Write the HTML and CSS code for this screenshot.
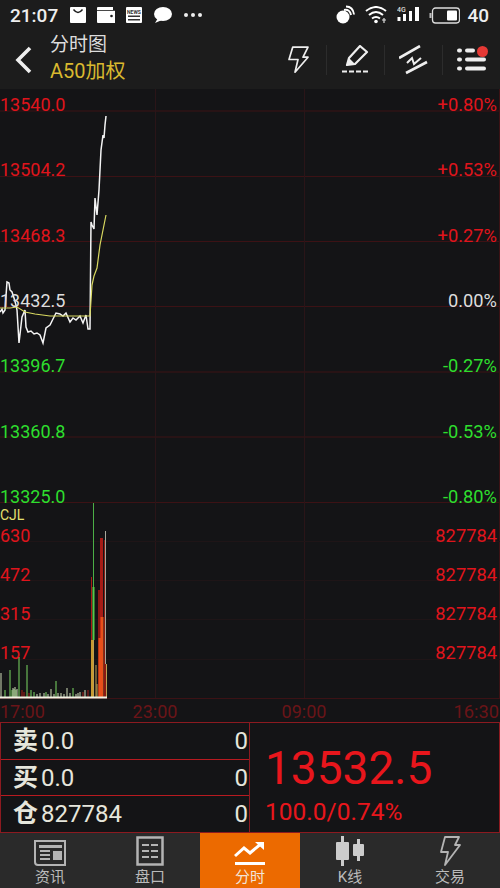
FILE: index.html
```html
<!DOCTYPE html>
<html lang="zh-CN">
<head>
    <meta charset="UTF-8">
    <meta name="viewport" content="width=device-width, initial-scale=1.0">
    <title>分时图</title>
    <link rel="stylesheet" href="styles.css">
</head>
<body>
    <div class="status">
        <span class="time">21:07</span>
        <!-- notification icons -->
        <svg class="st-icon" width="18" height="18" viewBox="0 0 18 18"><rect x="1" y="1" width="16" height="16" rx="1" fill="#fff"/><path d="M4.500 3.500q4.500 6 9 0" fill="none" stroke="#1c1c1c" stroke-width="1.400"/></svg>
        <svg class="st-icon" width="20" height="18" viewBox="0 0 20 18"><path d="M2 1h15v3h2v13H2q-1 0-1-1V2q0-1 1-1z" fill="#fff"/><rect x="0" y="4" width="19" height="0.800" fill="#1c1c1c"/><circle cx="15.500" cy="10" r="1.300" fill="#1c1c1c"/></svg>
        <svg class="st-icon" width="18" height="18" viewBox="0 0 18 18"><rect x="1" y="1" width="16" height="16" rx="1" fill="#fff"/><text class="news" x="9" y="7.500">NEWS</text><rect x="3" y="9.500" width="12" height="1.500" fill="#333"/><rect x="3" y="13" width="12" height="1.500" fill="#333"/></svg>
        <svg class="st-icon" width="20" height="18" viewBox="0 0 20 18"><ellipse cx="11" cy="8" rx="9" ry="7" fill="#fff"/><path d="M6 12l-3 5 7-3z" fill="#fff"/></svg>
        <svg class="st-icon dots" width="20" height="6" viewBox="0 0 20 6"><circle cx="3" cy="3" r="2" fill="#eee"/><circle cx="10" cy="3" r="2" fill="#eee"/><circle cx="17" cy="3" r="2" fill="#eee"/></svg>
        <span class="spacer"></span>
        <svg class="st-icon" width="20" height="20" viewBox="0 0 20 20"><circle cx="8" cy="12" r="6.500" fill="#fff"/><path d="M9 5q6-1 7 5M11 1.500q7 0 8 8" fill="none" stroke="#fff" stroke-width="2"/></svg>
        <svg class="st-icon wifi" width="22" height="18" viewBox="0 0 22 18"><path d="M1 5q10-8 20 0M4 9q7-6 14 0M7 12.500q4-3 8 0" fill="none" stroke="#fff" stroke-width="2"/><circle cx="11" cy="15.500" r="1.800" fill="#fff"/><path d="M17 14h4M19 12v5" stroke="#ddd" stroke-width="1.200"/></svg>
        <svg class="st-icon signal" width="22" height="18" viewBox="0 0 22 18"><text class="net" x="0" y="6">4G</text><rect x="0.500" y="11" width="3" height="4" fill="#fff"/><rect x="6" y="8" width="3" height="7" fill="#fff"/><rect x="12" y="5" width="3" height="10" fill="#fff"/><rect x="18" y="1" width="4" height="14" fill="#fff"/></svg>
        <svg class="st-icon battery" width="31" height="17" viewBox="0 0 31 17"><rect x="3.500" y="1" width="27" height="15" rx="3" fill="none" stroke="#ddd" stroke-width="1.300"/><rect x="0.500" y="6" width="2" height="5" fill="#bbb"/><rect x="18" y="3.500" width="10" height="10" rx="1" fill="#fff"/></svg>
        <span class="batt-num">40</span>
    </div>

    <div class="toolbar">
        <svg class="back" width="20" height="30" viewBox="0 0 20 30"><path d="M16 3L4 15l12 12" fill="none" stroke="#eee" stroke-width="3.600"/></svg>
        <div class="title">
            <div class="title-main">分时图</div>
            <div class="title-sub">A50加权</div>
        </div>
        <div class="tools">
            <div class="tool"><svg width="24" height="30" viewBox="0 0 24 30"><path d="M6.700 2.200H22l-5 10h5L9 27.200l3-12.700H3z" fill="none" stroke="#eee" stroke-width="1.700" stroke-linejoin="round"/></svg></div>
            <div class="tool"><svg width="30" height="30" viewBox="0 0 30 30"><path d="M6 20l2-7L19 1l7 6-12 12z" fill="none" stroke="#eee" stroke-width="2.200" stroke-linejoin="round"/><path d="M6 20l2-7 6 6z" fill="#eee"/><path d="M1 26.500h28" stroke="#eee" stroke-width="2.200" stroke-dasharray="5 2"/></svg></div>
            <div class="tool"><svg width="30" height="30" viewBox="0 0 30 30"><path d="M0 13L21 1M7 28L28 17" stroke="#eee" stroke-width="2.600" fill="none"/><path d="M8 18l5-5 2 6 7-6" stroke="#eee" stroke-width="2" fill="none"/></svg></div>
            <div class="tool last"><svg width="30" height="26" viewBox="0 0 30 26"><g fill="#eee"><rect x="0" y="1.500" width="5" height="4" rx="2"/><rect x="0" y="10.500" width="5" height="4" rx="2"/><rect x="0" y="19.500" width="5" height="4" rx="2"/><rect x="8" y="1.500" width="10" height="4" rx="2"/><rect x="8" y="10.500" width="21" height="4" rx="2"/><rect x="8" y="19.500" width="21" height="4" rx="2"/></g></svg><span class="dot"></span></div>
        </div>
    </div>

    <svg class="chart" width="500" height="633" viewBox="0 89 500 633">
        <g class="grid">
            <path d="M0 111H500M0 176.500H500M0 241.500H500M0 306.500H500M0 372H500M0 437H500M0 502.500H500M0 698.500H500M499.500 89V698"/>
        </g>
        <g class="grid faint">
            <path d="M155.500 89V698M304.500 89V698"/>
        </g>
        <g class="grid fainter">
            <path d="M0 541.500H500M0 580.500H500M0 619.500H500M0 659.500H500"/>
        </g>

        <!-- volume bars -->
        <g class="vol-green">
            <path d="M10 697V670M19 697V657M27 697V665M56 697V681M73 697V688M5 697V690M31 697V690M34 697V692M46 697V692M12 697V690M14 697V689M16 697V690"/>
        </g>
        <g class="vol-pale">
            <path d="M1 697V673M13 697V688M15 697V687M17 697V689M51 697V689M61 697V693M67 697V688M40 697V693M44 697V693M80 697V692M85 697V690M37 697V694M48 697V694M54 697V694M58 697V693M64 697V694M70 697V693M76 697V694M78 697V693"/>
        </g>
        <g class="vol-red">
            <path d="M22 697V690M24 697V692M29 697V693M83 697V692M88 697V690"/>
            <path class="thin" d="M91.500 697V577"/>
            <path class="fat" d="M101.500 697V538"/>
            <path class="side" d="M99 697V590M105 697V540"/>
        </g>
        <g class="vol-orange">
            <path class="wide" d="M100 697V638"/>
            <path class="wide" d="M102 697V617"/>
            <path class="side" d="M92 697V640"/>
        </g>
        <path class="vol-tan" d="M96 697V665M97 697V684M93.500 697V640M106.500 697V664"/>
        <path class="vol-top-green" d="M93.500 503V640"/>
        <path class="vol-top-green thick" d="M93.500 587V640"/>
        <path class="vol-grey" d="M105.500 664V531"/>
        <path class="vol-base" d="M0 697.500H107"/>

        <!-- price and average -->
        <polyline class="price" points="0,312 2,309 3,313 5,310 7,282 9,283 10,290 12,292 14,298 16,305 17,310 19,343 22,317 25,310 26,327 28,332 31,331 34,334 37,333 40,335 43,343 46,328 50,325 53,319 56,313 60,314 63,316 66,313 70,322 73,318 76,320 80,316 83,323 86,315 88,329 90,329 91,222 92,225 94,229 95,198 97,215 99,190 101,150 103,135 104,138 105,125 106,116"/>
        <polyline class="avg" points="0,308 10,308 17,307 25,312 35,314 50,316 70,316 90,316 92,285 94,276 97,268 100,245 104,225 106,215"/>

        <!-- price scale -->
        <g class="lbl">
            <text class="up" x="0" y="111">13540.0</text>
            <text class="up" x="0" y="176">13504.2</text>
            <text class="up" x="0" y="242">13468.3</text>
            <text class="flat" x="0" y="307">13432.5</text>
            <text class="down" x="0" y="372">13396.7</text>
            <text class="down" x="0" y="438">13360.8</text>
            <text class="down" x="0" y="503">13325.0</text>
            <text class="up end" x="497" y="111">+0.80%</text>
            <text class="up end" x="497" y="176">+0.53%</text>
            <text class="up end" x="497" y="242">+0.27%</text>
            <text class="flat end" x="497" y="307">0.00%</text>
            <text class="down end" x="497" y="372">-0.27%</text>
            <text class="down end" x="497" y="438">-0.53%</text>
            <text class="down end" x="497" y="503">-0.80%</text>
            <text class="up" x="0" y="542">630</text>
            <text class="up" x="0" y="581">472</text>
            <text class="up" x="0" y="620">315</text>
            <text class="up" x="0" y="659">157</text>
            <text class="up end" x="497" y="542">827784</text>
            <text class="up end" x="497" y="581">827784</text>
            <text class="up end" x="497" y="620">827784</text>
            <text class="up end" x="497" y="659">827784</text>
            <text class="time-lbl" x="0" y="718">17:00</text>
            <text class="time-lbl mid" x="155" y="718">23:00</text>
            <text class="time-lbl mid" x="304" y="718">09:00</text>
            <text class="time-lbl end" x="499" y="718">16:30</text>
        </g>
        <text class="cjl" x="0" y="520">CJL</text>
    </svg>

    <div class="quote">
        <div class="book">
            <div class="book-row"><b>卖</b><span class="val">0.0</span><span class="qty">0</span></div>
            <div class="book-row"><b>买</b><span class="val">0.0</span><span class="qty">0</span></div>
            <div class="book-row"><b>仓</b><span class="val">827784</span><span class="qty">0</span></div>
        </div>
        <div class="last-price">
            <div class="big">13532.5</div>
            <div class="chg">100.0/0.74%</div>
        </div>
    </div>

    <div class="tabs">
        <div class="tab">
            <svg width="32" height="26" viewBox="0 0 32 26"><path d="M1 1h30v24H4q-3 0-3-3z" fill="none" stroke="#b4b4b4" stroke-width="2"/><path d="M5 5h23v3H5z" fill="#b4b4b4"/><path d="M6 11h10M6 15h10M6 19h10" stroke="#b4b4b4" stroke-width="2"/><rect x="19" y="11" width="9" height="9" fill="#b4b4b4"/></svg>
            <span>资讯</span>
        </div>
        <div class="tab">
            <svg width="28" height="30" viewBox="0 0 28 30"><rect x="1.500" y="1.500" width="25" height="27" fill="none" stroke="#b4b4b4" stroke-width="2.500"/><path d="M6 9h7M15 9h7M6 15h7M15 15h7M6 21h7M15 21h7" stroke="#b4b4b4" stroke-width="2"/></svg>
            <span>盘口</span>
        </div>
        <div class="tab on">
            <svg width="32" height="26" viewBox="0 0 32 26"><path d="M1 16l9-8 6 5L28 3" fill="none" stroke="#fff" stroke-width="3"/><path d="M21 2h9v8z" fill="#fff"/><rect x="1" y="22" width="30" height="3" fill="#fff"/></svg>
            <span>分时</span>
        </div>
        <div class="tab">
            <svg width="28" height="30" viewBox="0 0 28 30"><rect x="0" y="6" width="13" height="18" rx="1" fill="#ccc"/><rect x="5" y="0" width="3" height="30" fill="#ccc"/><rect x="17" y="8" width="11" height="12" rx="1" fill="#ccc"/><rect x="21" y="3" width="3" height="22" fill="#ccc"/></svg>
            <span>K线</span>
        </div>
        <div class="tab">
            <svg width="22" height="30" viewBox="0 0 22 30"><path d="M6 1h14l-4 8h5L6 29l3-13H2z" fill="none" stroke="#b4b4b4" stroke-width="1.800" stroke-linejoin="round"/></svg>
            <span>交易</span>
        </div>
    </div>
</body>
</html>
```

FILE: styles.css
```css
* {
    box-sizing: border-box;
}
body {
    margin: 0;
    width: 500px;
    height: 888px;
    overflow: hidden;
    background-color: #141416;
    font-family: Roboto, "Noto Sans CJK SC", sans-serif;
    color: #eee;
}
.status {
    height: 30px;
    padding: 0 11px 0 10px;
    display: flex;
    align-items: center;
    gap: 9px;
    background-color: #1c1c1c;
}
.time {
    font-size: 19px;
    font-weight: 500;
    margin-right: 2px;
}
.st-icon {
    flex: none;
}
.st-icon.dots {
    margin-left: 2px;
}
.st-icon.wifi,
.st-icon.signal,
.st-icon.battery {
    margin-left: 1px;
}
.news {
    font-size: 5px;
    font-weight: 700;
    fill: #333;
    text-anchor: middle;
}
.net {
    font-size: 7px;
    font-weight: 500;
    fill: #ddd;
}
.spacer {
    flex: 1;
}
.batt-num {
    font-size: 19px;
    font-weight: 500;
    margin-left: -2px;
}
.toolbar {
    height: 59px;
    display: flex;
    align-items: center;
    background-color: #1c1c1c;
}
.back {
    margin-left: 14px;
    flex: none;
}
.title {
    margin-left: 16px;
    margin-bottom: 3px;
    line-height: 26px;
}
.title-main {
    font-size: 19px;
    color: #ddd;
}
.title-sub {
    font-size: 20px;
    color: #d9b92f;
}
.tools {
    margin-left: auto;
    display: flex;
    align-items: center;
}
.tool {
    position: relative;
    width: 58px;
    height: 30px;
    display: flex;
    align-items: center;
    justify-content: center;
    border-right: 1px solid #2c2c2c;
}
.tool.last {
    border-right: none;
    width: 57px;
}
.dot {
    position: absolute;
    top: 1px;
    right: 12px;
    width: 11px;
    height: 11px;
    border-radius: 50%;
    background-color: #e53935;
}
.chart {
    display: block;
}
.grid path {
    stroke: #3c1215;
    stroke-width: 1;
    fill: none;
}
.grid.faint path {
    stroke: #2a1518;
}
.grid.fainter path {
    stroke: #1f1517;
}
.vol-green path {
    stroke: #7ad862;
    stroke-width: 1;
    fill: none;
}
.vol-pale path {
    stroke: #d0dcb8;
    stroke-width: 1;
    fill: none;
}
.vol-red path {
    stroke: #a81c16;
    stroke-width: 1;
    fill: none;
}
.vol-red .fat {
    stroke-width: 3;
}
.vol-red .side {
    stroke: #8a1a14;
    stroke-width: 2;
}
.vol-orange path {
    stroke: #e8501a;
    fill: none;
}
.vol-orange .wide {
    stroke-width: 3;
}
.vol-orange .side {
    stroke: #c89a30;
    stroke-width: 2;
}
.vol-tan {
    stroke: #c0a050;
    stroke-width: 1;
    fill: none;
}
.vol-top-green {
    stroke: #4caf46;
    stroke-width: 1;
    fill: none;
}
.vol-top-green.thick {
    stroke: #58c848;
    stroke-width: 2;
}
.vol-grey {
    stroke: #a8a89c;
    stroke-width: 1;
    fill: none;
}
.vol-base {
    stroke: #f2f2e4;
    stroke-width: 2;
}
.price {
    fill: none;
    stroke: #f4f4f4;
    stroke-width: 1.500;
}
.avg {
    fill: none;
    stroke: #d8d860;
    stroke-width: 1.200;
}
.lbl text {
    font-size: 18px;
}
.lbl .end {
    font-size: 18.300px;
}
.up {
    fill: #e0141c;
}
.down {
    fill: #2ede2e;
}
.flat {
    fill: #ddd;
}
.end {
    text-anchor: end;
}
.mid {
    text-anchor: middle;
}
.lbl .time-lbl {
    fill: #6a1418;
}
.cjl {
    font-size: 14px;
    fill: #e4e070;
}
.quote {
    height: 111px;
    display: flex;
    border: 1px solid #8c1a20;
}
.book {
    width: 249px;
    display: flex;
    flex-direction: column;
    border-right: 1px solid #8c1a20;
}
.book-row {
    flex: 1 1 0;
    min-height: 0;
    display: flex;
    align-items: center;
    padding: 0 1px 0 12px;
    font-size: 24px;
    line-height: 30px;
    color: #e6e6dc;
    border-bottom: 1px solid #b81a20;
}
.book-row:last-child {
    border-bottom: none;
}
.book-row b {
    font-size: 25px;
    font-weight: 700;
    margin-right: 3px;
}
.qty {
    margin-left: auto;
}
.last-price {
    flex: 1;
    padding: 16px 0 0 15px;
    color: #e8161c;
}
.big {
    font-size: 46px;
    line-height: 58px;
}
.chg {
    font-size: 24.500px;
    line-height: 30px;
}
.tabs {
    height: 56px;
    display: flex;
    background-color: #2a2a2a;
}
.tab {
    width: 100px;
    display: flex;
    flex-direction: column;
    align-items: center;
    justify-content: flex-end;
    font-size: 15px;
    line-height: 20px;
    padding-bottom: 2px;
    color: #bbb;
}
.tab svg {
    margin-bottom: 1px;
}
.tab.on {
    background-color: #ec6a00;
    color: #f2e4d8;
}
```
